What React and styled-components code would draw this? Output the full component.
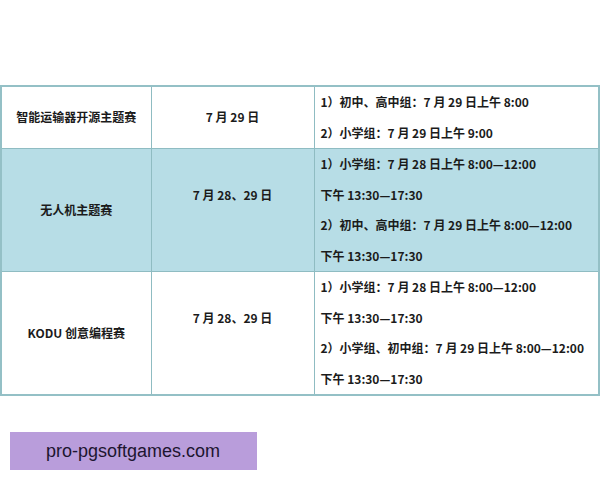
import React from 'react';
import styled, { createGlobalStyle } from 'styled-components';

const schedule = [
  {
    name: '智能运输器开源主题赛',
    date: '7 月 29 日',
    lift: false,
    shaded: false,
    lines: ['1）初中、高中组：7 月 29 日上午 8:00', '2）小学组：7 月 29 日上午 9:00'],
  },
  {
    name: '无人机主题赛',
    date: '7 月 28、29 日',
    lift: true,
    shaded: true,
    lines: [
      '1）小学组：7 月 28 日上午 8:00—12:00',
      '下午 13:30—17:30',
      '2）初中、高中组：7 月 29 日上午 8:00—12:00',
      '下午 13:30—17:30',
    ],
  },
  {
    name: 'KODU 创意编程赛',
    date: '7 月 28、29 日',
    lift: true,
    shaded: false,
    lines: [
      '1）小学组：7 月 28 日上午 8:00—12:00',
      '下午 13:30—17:30',
      '2）小学组、初中组：7 月 29 日上午 8:00—12:00',
      '下午 13:30—17:30',
    ],
  },
];

const App = () => {
  return (
    <>
      <GlobalStyle />
      <Page>
        <Table>
          <colgroup>
            <col style={{ width: 150 }} />
            <col style={{ width: 163 }} />
            <col />
          </colgroup>
          <tbody>
            {schedule.map((row) => (
              <Row key={row.name} $shaded={row.shaded}>
                <NameCell>{row.name}</NameCell>
                <DateCell $lift={row.lift}>{row.date}</DateCell>
                <TimeCell>
                  {row.lines.map((line) => (
                    <TimeLine key={line}>{line}</TimeLine>
                  ))}
                </TimeCell>
              </Row>
            ))}
          </tbody>
        </Table>
        <Watermark>pro-pgsoftgames.com</Watermark>
      </Page>
    </>
  );
};

const GlobalStyle = createGlobalStyle`
  html, body {
    margin: 0;
    padding: 0;
    background: #ffffff;
  }
`;

const Page = styled.div`
  display: flex;
  flex-direction: column;
  align-items: flex-start;
  width: 600px;
  height: 480px;
  padding-top: 85px;
  box-sizing: border-box;
  overflow: hidden;
`;

const Table = styled.table`
  width: 600px;
  table-layout: fixed;
  border-collapse: collapse;
  border: 2px solid #94c0c6;
  font-family: "Noto Sans CJK SC", "Noto Sans", sans-serif;
  font-size: 12px;
  font-weight: 700;
  color: #1b1b1b;
`;

const Row = styled.tr`
  background: ${({ $shaded }) => ($shaded ? '#b7dde6' : '#ffffff')};
`;

const Cell = styled.td`
  border: 1px solid #8fbcc2;
  padding: 0;
  line-height: 30.5px;
  vertical-align: middle;
`;

const NameCell = styled(Cell)`
  text-align: center;
`;

const DateCell = styled(Cell)`
  text-align: center;
  padding-bottom: ${({ $lift }) => ($lift ? '30px' : '0')};
`;

const TimeCell = styled(Cell)`
  padding-left: 6px;
  white-space: nowrap;
`;

const TimeLine = styled.div`
  height: 30.5px;
`;

const Watermark = styled.div`
  margin: 36px 0 0 10px;
  width: 247px;
  height: 38px;
  display: flex;
  align-items: center;
  padding-left: 36px;
  box-sizing: border-box;
  background: #b99ddb;
  color: #1d1530;
  font-family: "Liberation Sans", Arial, sans-serif;
  font-size: 18px;
`;

export default App;
